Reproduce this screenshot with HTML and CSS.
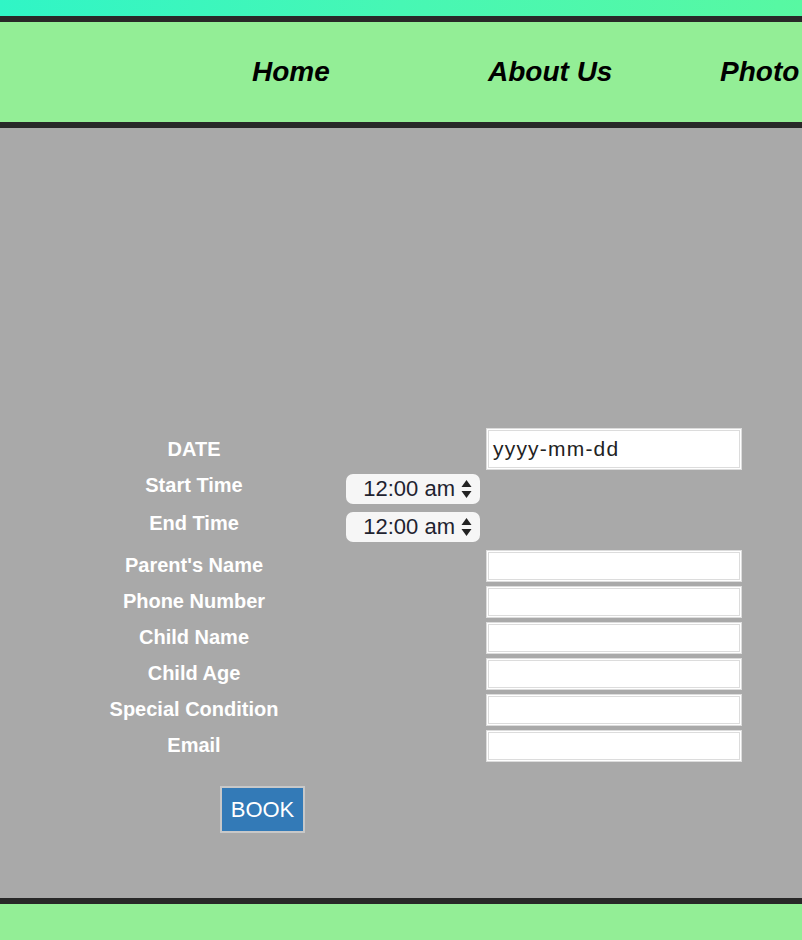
FILE: index.html
```html
<!DOCTYPE html>
<html>
<head>
<meta charset="utf-8">
<title>Booking</title>
<link rel="stylesheet" href="styles.css">
</head>
<body>
<div class="topstrip"></div>
<nav class="nav">
  <a class="nav-link" href="#">Home</a>
  <a class="nav-link" href="#">About Us</a>
  <a class="nav-link" href="#">Photo</a>
</nav>
<main class="main">
  <form class="form">
    <div class="row row-date">
      <label class="label">DATE</label>
      <span></span>
      <div class="field field-date">yyyy-mm-dd</div>
    </div>
    <div class="row row-time">
      <label class="label label-time">Start Time</label>
      <div class="timesel">12:00 am<svg class="arrows" width="11" height="20" viewBox="0 0 11 20"><path d="M5.5 1 L10.5 8 L0.5 8 Z" fill="#222"/><path d="M5.5 19 L10.5 12 L0.5 12 Z" fill="#222"/></svg></div>
      <span></span>
    </div>
    <div class="row row-time">
      <label class="label label-time">End Time</label>
      <div class="timesel">12:00 am<svg class="arrows" width="11" height="20" viewBox="0 0 11 20"><path d="M5.5 1 L10.5 8 L0.5 8 Z" fill="#222"/><path d="M5.5 19 L10.5 12 L0.5 12 Z" fill="#222"/></svg></div>
      <span></span>
    </div>
    <div class="row row-text first">
      <label class="label">Parent's Name</label>
      <span></span>
      <div class="field"></div>
    </div>
    <div class="row row-text">
      <label class="label">Phone Number</label>
      <span></span>
      <div class="field"></div>
    </div>
    <div class="row row-text">
      <label class="label">Child Name</label>
      <span></span>
      <div class="field"></div>
    </div>
    <div class="row row-text">
      <label class="label">Child Age</label>
      <span></span>
      <div class="field"></div>
    </div>
    <div class="row row-text">
      <label class="label">Special Condition</label>
      <span></span>
      <div class="field"></div>
    </div>
    <div class="row row-text">
      <label class="label">Email</label>
      <span></span>
      <div class="field"></div>
    </div>
    <div class="actions">
      <button type="button" class="book">BOOK</button>
    </div>
  </form>
</main>
<footer class="footer"></footer>
</body>
</html>
```

FILE: styles.css
```css
html, body {
  margin: 0;
  padding: 0;
}
body {
  font-family: "Liberation Sans", Arial, sans-serif;
  overflow-x: hidden;
  background: #92ee95;
}
.topstrip {
  height: 16px;
  background: linear-gradient(to right, #30f5c6, #47f7b4 50%, #58f8a2);
}
.nav {
  height: 100px;
  background: #93ee96;
  border-top: 6px solid #282828;
  border-bottom: 6px solid #282828;
  display: flex;
  align-items: center;
  padding-left: 252px;
  white-space: nowrap;
  overflow: hidden;
}
.nav-link {
  font-size: 28px;
  font-weight: bold;
  font-style: italic;
  color: #000;
  text-decoration: none;
  width: 236px;
  flex: none;
}
.nav-link:nth-child(2) {
  width: 232px;
}
.nav-link:last-child {
  width: auto;
}
.main {
  background: #a9a9a9;
  height: 770px;
  box-sizing: border-box;
  padding-top: 300px;
}
.form {
  padding-left: 96px;
  display: flex;
  flex-direction: column;
}
.row {
  display: grid;
  grid-template-columns: 196px 194px 256px;
  align-items: center;
}
.row-date {
  height: 42px;
}
.row-time {
  height: 38px;
}
.row-text {
  height: 36px;
}
.row-text.first {
  margin-top: 2px;
}
.row-text .label {
  margin-top: -2px;
}
.label {
  color: #fff;
  font-weight: bold;
  font-size: 20px;
  text-align: center;
  white-space: nowrap;
  line-height: 23px;
}
.label-time {
  align-self: start;
  padding-top: 4px;
}
.field {
  box-sizing: border-box;
  height: 32px;
  background: #fff;
  border: 3px double #dcdcdc;
}
.field-date {
  height: 42px;
  font-size: 21px;
  letter-spacing: 1.2px;
  color: #222;
  line-height: 36px;
  padding-left: 4px;
}
.timesel {
  justify-self: end;
  margin-right: 6px;
  width: 134px;
  height: 30px;
  box-sizing: border-box;
  background: #f6f6f6;
  border-radius: 7px;
  color: #1f2330;
  font-size: 22px;
  display: flex;
  align-items: center;
  justify-content: flex-end;
  padding-right: 8px;
  gap: 6px;
}
.arrows {
  display: block;
}
.actions {
  margin-top: 22px;
  padding-left: 124px;
}
.book {
  width: 85px;
  height: 47px;
  background: #337ab7;
  border: 2px solid #c8c8c8;
  color: #fff;
  font-family: "Liberation Sans", Arial, sans-serif;
  font-size: 22px;
  padding: 0;
  cursor: pointer;
}
.footer {
  border-top: 6px solid #282828;
  height: 40px;
  background: #93ee96;
}
```
